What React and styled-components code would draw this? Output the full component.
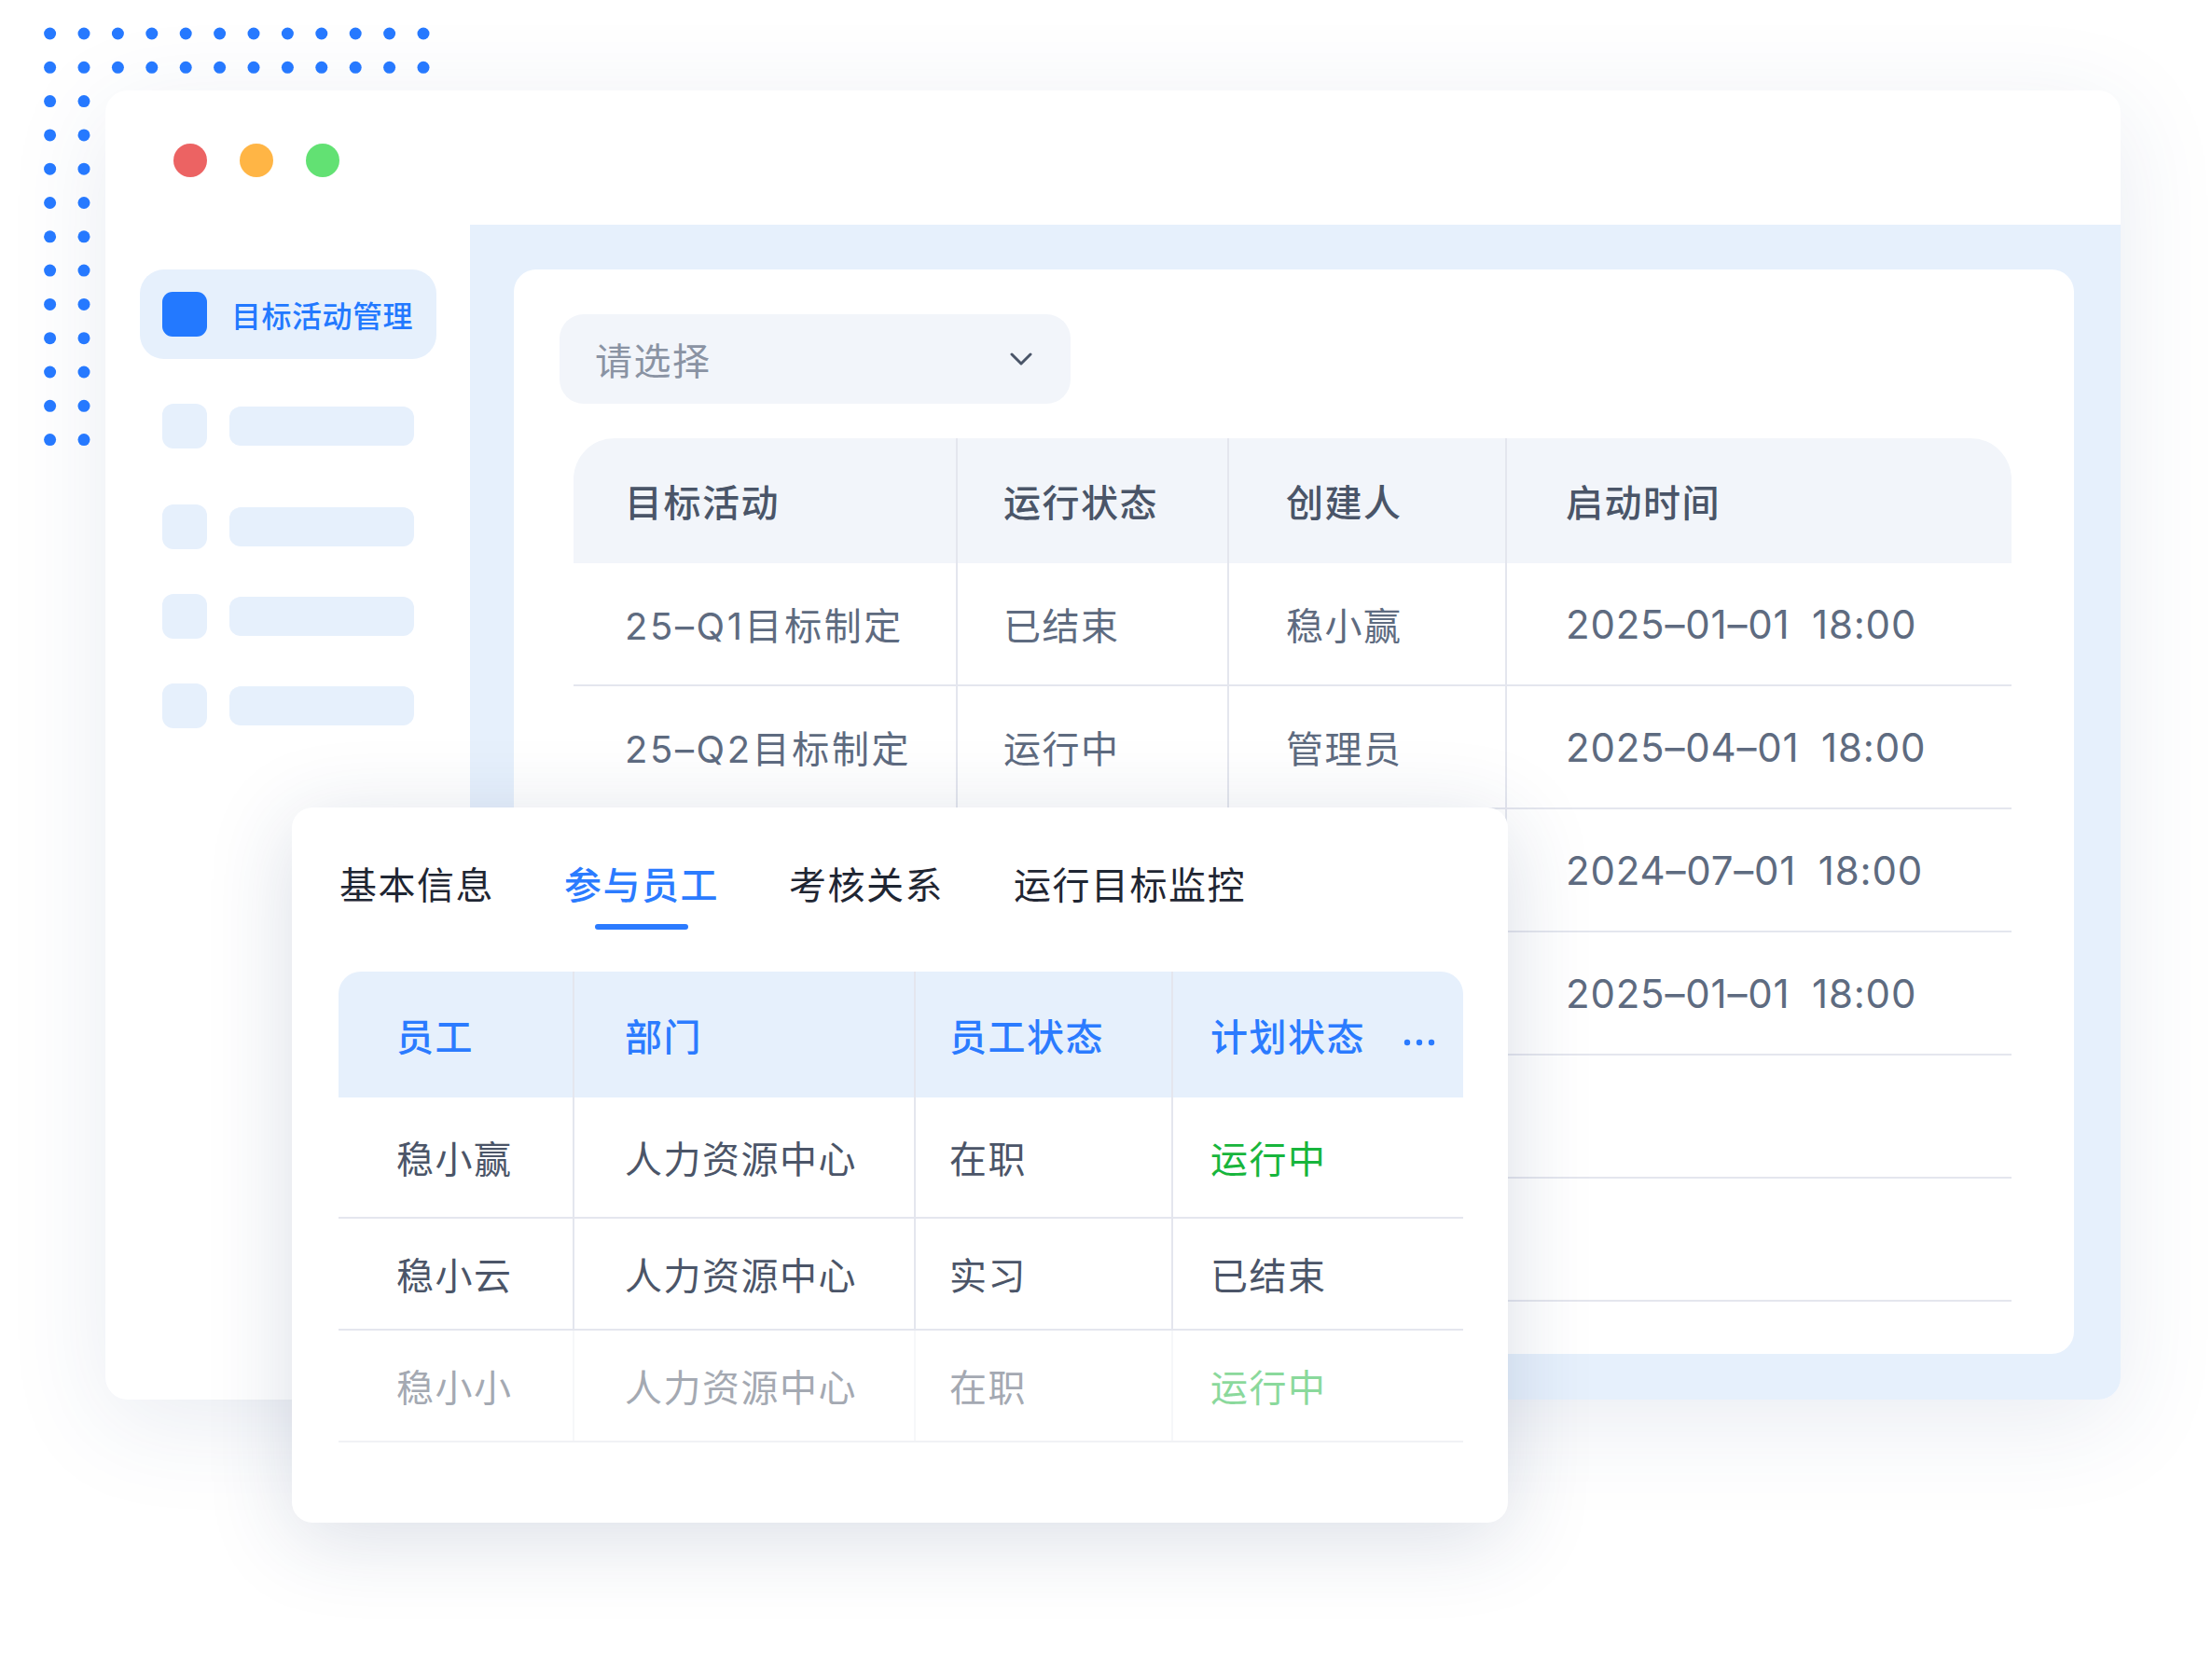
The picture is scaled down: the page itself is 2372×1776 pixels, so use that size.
import styled, { createGlobalStyle } from "styled-components";

const GlobalStyle = createGlobalStyle`
    body{
        margin: 0;
        background: #FFF;
        font-family: "Inter", "Noto Sans CJK SC", sans-serif;
    }
`;

const BLUE = "#2B7BFF";
const LINE = "#E4E6EE";

const mainCols = [
    { w: 412, pad: 55 },
    { w: 291, pad: 49 },
    { w: 298, pad: 61 },
    { w: 541, pad: 63 },
];

// rows 3 and 4 lie under the staff card, only their dates show
const mainRows = [
    ["25–Q1目标制定", "已结束", "稳小赢", "2025–01–01 18:00"],
    ["25–Q2目标制定", "运行中", "管理员", "2025–04–01 18:00"],
    ["", "", "", "2024–07–01 18:00"],
    ["", "", "", "2025–01–01 18:00"],
    ["", "", "", ""],
    ["", "", "", ""],
];

const staffCols = [
    { w: 253, pad: 62 },
    { w: 366, pad: 54 },
    { w: 276, pad: 36 },
    { w: 311, pad: 40 },
];

const staffRows = [
    { h: 130, cells: ["稳小赢", "人力资源中心", "在职", "运行中"], green: true },
    { h: 120, cells: ["稳小云", "人力资源中心", "实习", "已结束"], green: false },
    { h: 120, cells: ["稳小小", "人力资源中心", "在职", "运行中"], green: true, faded: true },
];

const placeholders = [48, 60, 48, 48];

function Dots(){
    const circles = [];
    for(let r = 0; r < 13; r++){
        const cols = r < 2 ? 12 : 2;
        for(let c = 0; c < cols; c++){
            circles.push(<circle key={`${r}-${c}`} cx={53.6 + c * 36.4} cy={36 + r * 36.3} r="6.5" fill="#2679FF" />);
        }
    }
    return <DotGrid width="470" height="490" viewBox="0 0 470 490">{circles}</DotGrid>;
}

export default function App(){
    return(
        <Page>
            <GlobalStyle />
            <Dots />
            <Window>
                <TitleBar>
                    <Light $color="#EC6363" />
                    <Light $color="#FFB545" />
                    <Light $color="#62E173" />
                </TitleBar>
                <Body>
                    <Sidebar>
                        <ActiveItem>
                            <ActiveIcon />
                            <ActiveLabel>目标活动管理</ActiveLabel>
                        </ActiveItem>
                        {placeholders.map((m, i) => (
                            <GhostItem key={i} $top={m}>
                                <GhostIcon />
                                <GhostBar />
                            </GhostItem>
                        ))}
                    </Sidebar>
                    <Content>
                        <Card>
                            <Select>
                                <span>请选择</span>
                                <svg width="24" height="14" viewBox="0 0 24 14">
                                    <path d="M2 2 L12 12 L22 2" fill="none" stroke="#4A5568" strokeWidth="3" strokeLinecap="round" strokeLinejoin="round" />
                                </svg>
                            </Select>
                            <MainTable>
                                <MainHead>
                                    {["目标活动", "运行状态", "创建人", "启动时间"].map((t, i) => (
                                        <MainCell key={i} $w={mainCols[i].w} $pad={mainCols[i].pad} $last={i === 3} $head>{t}</MainCell>
                                    ))}
                                </MainHead>
                                {mainRows.map((row, r) => (
                                    <MainRow key={r}>
                                        {row.map((t, i) => (
                                            <MainCell key={i} $w={mainCols[i].w} $pad={mainCols[i].pad} $last={i === 3} $date={i === 3} $latin={i === 0}>{t}</MainCell>
                                        ))}
                                    </MainRow>
                                ))}
                            </MainTable>
                        </Card>
                    </Content>
                </Body>
            </Window>

            <Overlay>
                <Tabs>
                    <Tab>基本信息</Tab>
                    <Tab $active>参与员工</Tab>
                    <Tab>考核关系</Tab>
                    <Tab>运行目标监控</Tab>
                </Tabs>
                <StaffTable>
                    <StaffHead>
                        {["员工", "部门", "员工状态", "计划状态"].map((t, i) => (
                            <StaffCell key={i} $w={staffCols[i].w} $pad={staffCols[i].pad} $last={i === 3} $head>
                                {t}
                                {i === 3 && (
                                    <More width="34" height="8" viewBox="0 0 34 8">
                                        <circle cx="4" cy="4" r="3.2" fill={BLUE} />
                                        <circle cx="17" cy="4" r="3.2" fill={BLUE} />
                                        <circle cx="30" cy="4" r="3.2" fill={BLUE} />
                                    </More>
                                )}
                            </StaffCell>
                        ))}
                    </StaffHead>
                    {staffRows.map((row, r) => (
                        <StaffRow key={r} $h={row.h} $soft={r === staffRows.length - 1}>
                            {row.cells.map((t, i) => (
                                <StaffCell key={i} $w={staffCols[i].w} $pad={staffCols[i].pad} $last={i === 3} $faded={row.faded} $green={i === 3 && row.green}>
                                    {t}
                                </StaffCell>
                            ))}
                        </StaffRow>
                    ))}
                </StaffTable>
            </Overlay>
        </Page>
    );
}

const Page = styled.div`
    position: relative;
    width: 2372px;
    height: 1776px;
    box-sizing: border-box;
    padding: 97px 0 0 113px;
    overflow: hidden;
`;

const DotGrid = styled.svg`
    position: absolute;
    left: 0;
    top: 0;
`;

const Window = styled.div`
    width: 2161px;
    height: 1404px;
    background: #FFF;
    border-radius: 24px;
    box-shadow: 0 24px 110px rgba(40, 70, 130, 0.10);
    overflow: hidden;
    display: flex;
    flex-direction: column;
`;

const TitleBar = styled.div`
    height: 144px;
    flex-shrink: 0;
    box-sizing: border-box;
    padding: 6px 0 0 73px;
    display: flex;
    align-items: center;
    gap: 35px;
`;

const Light = styled.div`
    width: 36px;
    height: 36px;
    border-radius: 50%;
    background: ${p => p.$color};
`;

const Body = styled.div`
    flex: 1;
    display: flex;
    min-height: 0;
`;

const Sidebar = styled.div`
    width: 391px;
    flex-shrink: 0;
    box-sizing: border-box;
    padding: 48px 0 0 37px;
`;

const ActiveItem = styled.div`
    width: 318px;
    height: 96px;
    border-radius: 26px;
    background: #E6F0FC;
    display: flex;
    align-items: center;
    gap: 26px;
    padding-left: 24px;
    box-sizing: border-box;
`;

const ActiveIcon = styled.div`
    width: 48px;
    height: 48px;
    border-radius: 11px;
    background: #2379FF;
`;

const ActiveLabel = styled.span`
    font-size: 32px;
    font-weight: 500;
    color: #2379FF;
    letter-spacing: 0.5px;
`;

const GhostItem = styled.div`
    display: flex;
    align-items: center;
    gap: 24px;
    padding-left: 24px;
    margin-top: ${p => p.$top}px;
`;

const GhostIcon = styled.div`
    width: 48px;
    height: 48px;
    border-radius: 12px;
    background: #E6F0FC;
`;

const GhostBar = styled.div`
    width: 198px;
    height: 42px;
    border-radius: 12px;
    background: #E6F0FC;
`;

const Content = styled.div`
    flex: 1;
    background: #E6F0FC;
    padding: 48px 50px 49px 47px;
    box-sizing: border-box;
    display: flex;
`;

const Card = styled.div`
    flex: 1;
    background: #FFF;
    border-radius: 24px;
    padding: 48px 0 0 49px;
`;

const Select = styled.div`
    width: 548px;
    height: 96px;
    box-sizing: border-box;
    border-radius: 26px;
    background: #F2F5FA;
    display: flex;
    align-items: center;
    justify-content: space-between;
    padding: 0 41px 0 38px;
    font-size: 40px;
    letter-spacing: 1.5px;
    color: #8A93A3;
`;

const MainTable = styled.div`
    margin: 37px 0 0 15px;
    width: 1542px;
`;

const MainHead = styled.div`
    display: flex;
    height: 134px;
    background: #F2F5FA;
    border-radius: 44px 44px 0 0;
`;

const MainRow = styled.div`
    display: flex;
    height: 132px;
    box-sizing: border-box;
    border-bottom: 2px solid ${LINE};
`;

const MainCell = styled.div`
    width: ${p => p.$w}px;
    flex-shrink: 0;
    box-sizing: border-box;
    padding-left: ${p => p.$pad}px;
    display: flex;
    align-items: center;
    border-right: ${p => p.$last ? "none" : `2px solid ${LINE}`};
    font-size: ${p => p.$date ? 42 : 40}px;
    letter-spacing: ${p => p.$date ? 0.8 : p.$latin ? 2.6 : 1.5}px;
    word-spacing: ${p => p.$date ? 11 : 0}px;
    font-weight: ${p => p.$head ? 500 : 400};
    color: ${p => p.$head ? "#4A5568" : "#5E6B80"};
    white-space: pre;
`;

const Overlay = styled.div`
    position: absolute;
    left: 313px;
    top: 866px;
    width: 1304px;
    height: 767px;
    box-sizing: border-box;
    padding: 56px 48px 0 50px;
    background: #FFF;
    border-radius: 22px;
    box-shadow: 0 16px 90px rgba(38, 58, 104, 0.17);
`;

const Tabs = styled.div`
    display: flex;
    gap: 75px;
    padding-left: 1px;
`;

const Tab = styled.div`
    position: relative;
    font-size: 40px;
    line-height: 56px;
    letter-spacing: 1.5px;
    color: ${p => p.$active ? BLUE : "#1F2633"};
    font-weight: ${p => p.$active ? 500 : 400};

    &::after{
        content: "";
        display: ${p => p.$active ? "block" : "none"};
        position: absolute;
        left: 50%;
        bottom: -19px;
        width: 100px;
        height: 6px;
        border-radius: 3px;
        transform: translateX(-50%);
        background: ${BLUE};
    }
`;

const StaffTable = styled.div`
    margin-top: 64px;
    width: 1206px;
`;

const StaffHead = styled.div`
    display: flex;
    height: 135px;
    background: #E6F0FC;
    border-radius: 24px 24px 0 0;
`;

const StaffRow = styled.div`
    display: flex;
    height: ${p => p.$h}px;
    box-sizing: border-box;
    border-bottom: 2px solid ${p => p.$soft ? "#F1F2F5" : LINE};
`;

const StaffCell = styled.div`
    width: ${p => p.$w}px;
    flex-shrink: 0;
    box-sizing: border-box;
    padding-left: ${p => p.$pad}px;
    padding-right: ${p => p.$head && p.$last ? 30 : 0}px;
    display: flex;
    align-items: center;
    justify-content: ${p => p.$head && p.$last ? "space-between" : "flex-start"};
    border-right: ${p => p.$last ? "none" : `2px solid ${p.$faded ? "#EEF0F4" : LINE}`};
    font-size: 40px;
    letter-spacing: 1.5px;
    font-weight: ${p => p.$head ? 500 : 400};
    color: ${p => p.$head ? BLUE : p.$green ? "#17B53C" : "#4B5568"};
    opacity: ${p => p.$faded ? 0.5 : 1};
`;

const More = styled.svg`
    margin-top: 16px;
`;
